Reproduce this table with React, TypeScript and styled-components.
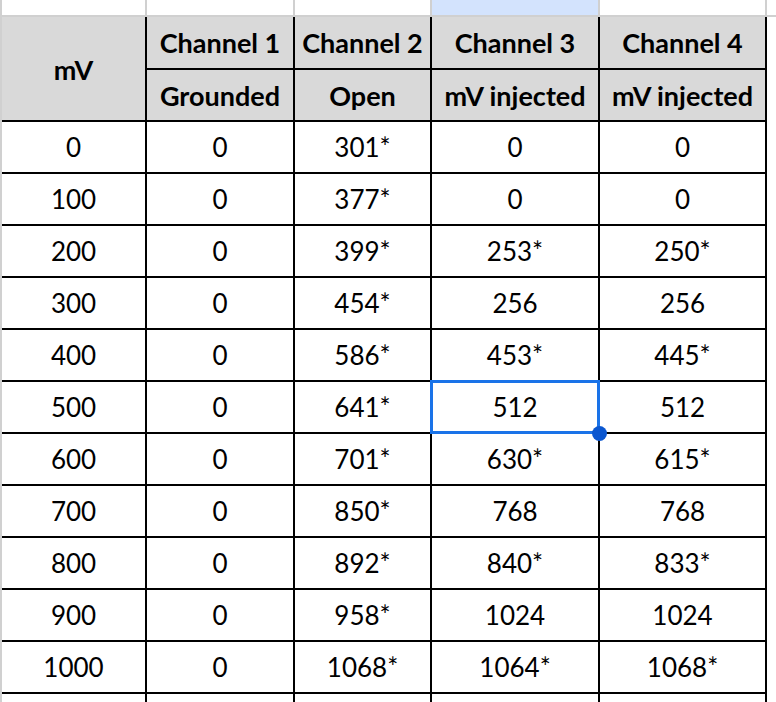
import React from "react";
import styled, { createGlobalStyle } from "styled-components";

const GlobalStyle = createGlobalStyle`
  html, body {
    margin: 0;
    padding: 0;
    background: #ffffff;
    overflow: hidden;
  }
  body {
    font-family: Lato, "Open Sans", "Liberation Sans", sans-serif;
    color: #000;
  }
`;

const COLS = "143px 146px 135px 166px 165px";

const Sheet = styled.div`
  width: 774px;
  height: 702px;
  border-left: 2px solid #d0d0d0;
  display: flex;
  flex-direction: column;
  overflow: hidden;
`;

const ColumnStrip = styled.div`
  flex-shrink: 0;
  display: grid;
  grid-template-columns: ${COLS} 1fr;
  gap: 2px;
  height: 15px;
  background: #d0d0d0;
  padding-bottom: 2px;
`;

const StripCell = styled.div<{ $active?: boolean }>`
  background: ${(p) => (p.$active ? "#d3e3fd" : "#ffffff")};
`;

const Table = styled.div`
  flex-shrink: 0;
  display: grid;
  grid-template-columns: ${COLS};
  grid-template-rows: 51px 50px;
  grid-auto-rows: 50px;
  gap: 2px;
  width: max-content;
  background: #000;
  border-right: 2px solid #000;
`;

const HeadCell = styled.div<{ $span?: boolean }>`
  background: #d9d9d9;
  display: flex;
  align-items: center;
  justify-content: center;
  font-weight: 700;
  font-size: 27px;
  white-space: nowrap;
  ${(p) => (p.$span ? "grid-row: span 2; padding-top: 2px;" : "")}
`;

const Cell = styled.div`
  position: relative;
  background: #ffffff;
  display: flex;
  align-items: center;
  justify-content: center;
  font-size: 26px;
  white-space: nowrap;
`;

const Selection = styled.div`
  position: absolute;
  z-index: 2;
  top: -2px;
  left: -2px;
  right: -2px;
  bottom: -2px;
  border: 3px solid #1a73e8;
  pointer-events: none;
`;

const Handle = styled.div`
  position: absolute;
  z-index: 3;
  right: -9px;
  bottom: -9px;
  width: 15px;
  height: 15px;
  border-radius: 50%;
  background: #0b57d0;
`;

const rows: string[][] = [
  ["0", "0", "301*", "0", "0"],
  ["100", "0", "377*", "0", "0"],
  ["200", "0", "399*", "253*", "250*"],
  ["300", "0", "454*", "256", "256"],
  ["400", "0", "586*", "453*", "445*"],
  ["500", "0", "641*", "512", "512"],
  ["600", "0", "701*", "630*", "615*"],
  ["700", "0", "850*", "768", "768"],
  ["800", "0", "892*", "840*", "833*"],
  ["900", "0", "958*", "1024", "1024"],
  ["1000", "0", "1068*", "1064*", "1068*"],
  ["", "", "", "", ""],
];

export default function App() {
  return (
    <>
      <GlobalStyle />
      <Sheet>
        <ColumnStrip>
          <StripCell />
          <StripCell />
          <StripCell />
          <StripCell $active />
          <StripCell />
          <StripCell />
        </ColumnStrip>
        <Table>
          <HeadCell $span>mV</HeadCell>
          <HeadCell>Channel 1</HeadCell>
          <HeadCell>Channel 2</HeadCell>
          <HeadCell>Channel 3</HeadCell>
          <HeadCell>Channel 4</HeadCell>
          <HeadCell>Grounded</HeadCell>
          <HeadCell>Open</HeadCell>
          <HeadCell>mV injected</HeadCell>
          <HeadCell>mV injected</HeadCell>
          {rows.map((r, ri) =>
            r.map((v, ci) => (
              <Cell key={`${ri}-${ci}`}>
                {v}
                {ri === 5 && ci === 3 && (
                  <>
                    <Selection />
                    <Handle />
                  </>
                )}
              </Cell>
            ))
          )}
        </Table>
      </Sheet>
    </>
  );
}
